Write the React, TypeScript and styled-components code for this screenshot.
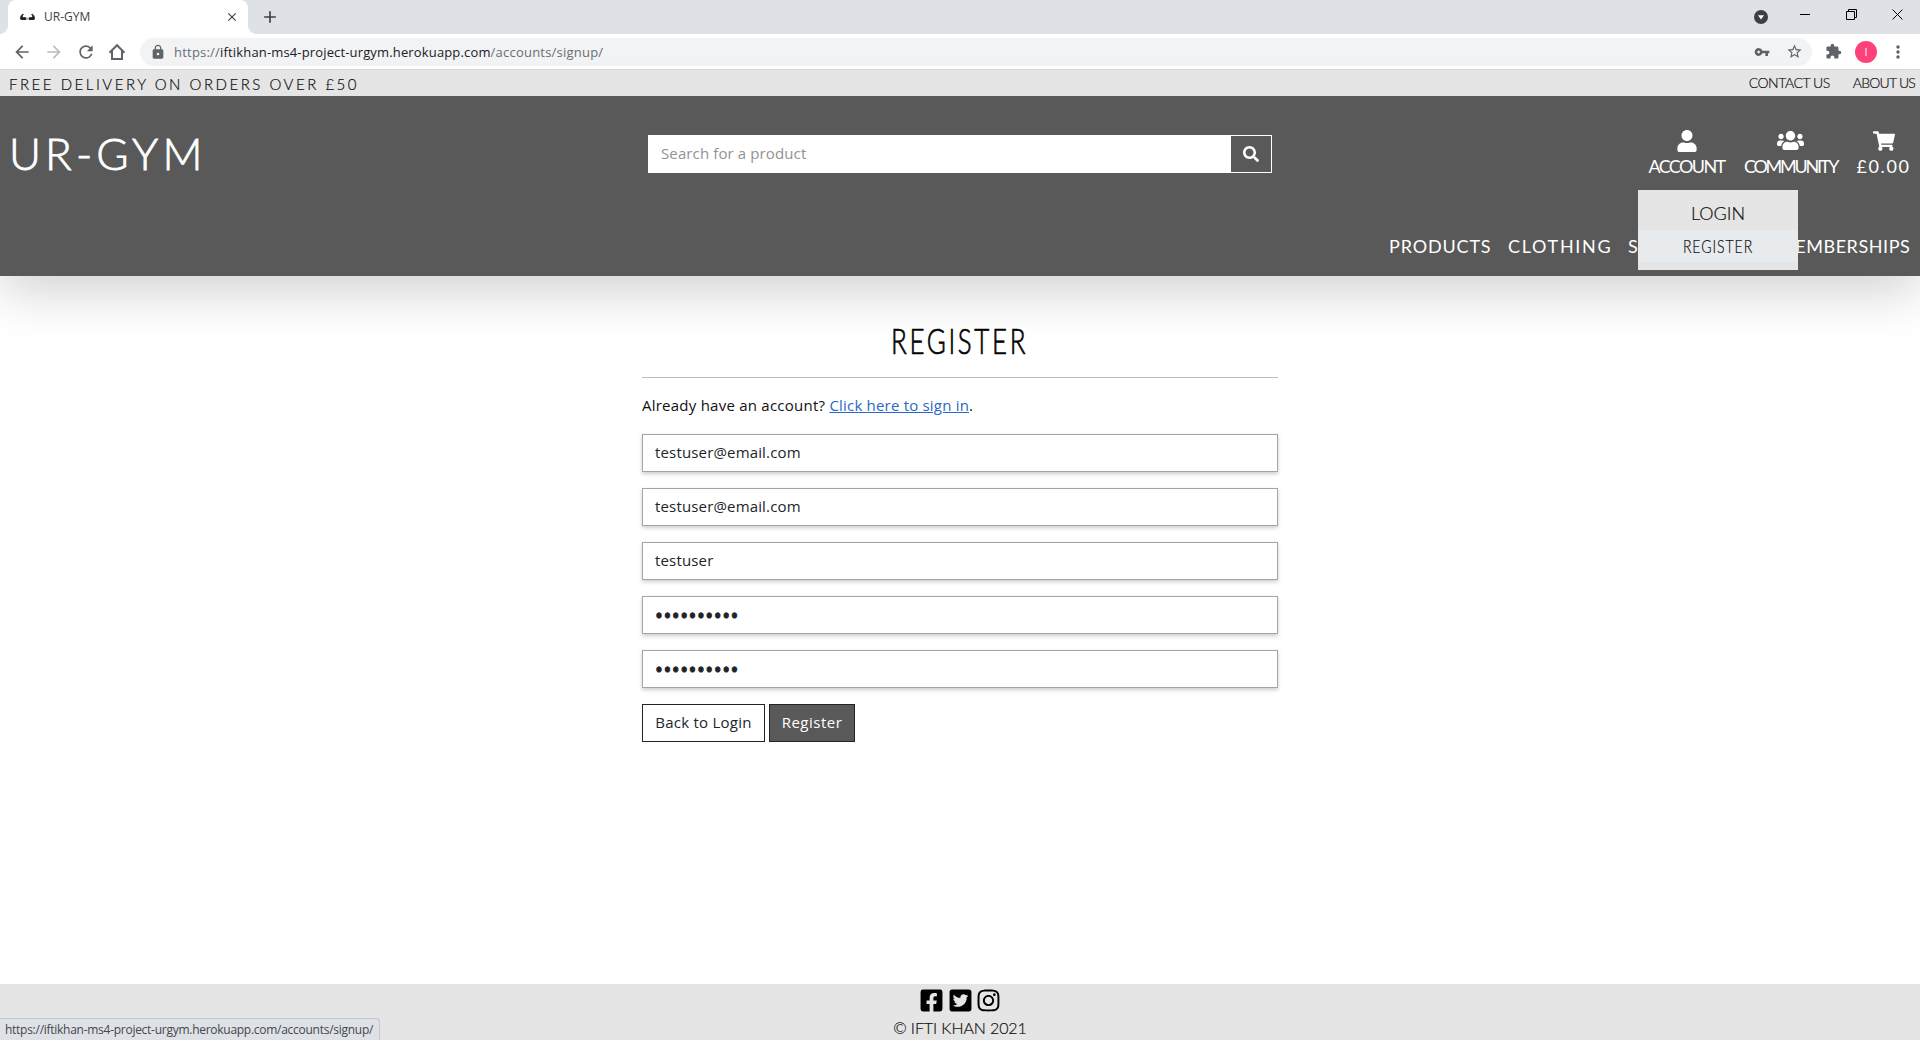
import React from "react";
import styled, { createGlobalStyle } from "styled-components";
import {
  MdArrowBack, MdArrowForward, MdRefresh, MdLock, MdVpnKey, MdStarBorder,
  MdExtension, MdMoreVert, MdClose, MdAdd,
} from "react-icons/md";
import {
  FaUser, FaUsers, FaShoppingCart, FaSearch, FaFacebookSquare, FaTwitterSquare, FaInstagram,
} from "react-icons/fa";

const GlobalStyle = createGlobalStyle`
  *, *::before, *::after { box-sizing: border-box; }
  body {
    margin: 0;
    background: #fff;
    color: #212529;
    font-family: "Open Sans", "Noto Sans", sans-serif;
    font-size: 15px;
  }
  svg { display: block; flex: none; }
  a { color: inherit; text-decoration: none; }
`;

const display = `font-family: Lato, "Open Sans", sans-serif; white-space: nowrap;`;

const Screen = styled.div`
  display: flex;
  flex-direction: column;
  height: 1040px;
  overflow: hidden;
`;

/* ---------- browser chrome ---------- */

const TabStrip = styled.div`
  display: flex;
  align-items: stretch;
  height: 34px;
  padding-left: 8px;
  background: #dee1e6;
  color: #3c4043;
`;

const Tab = styled.div`
  position: relative;
  display: flex;
  align-items: center;
  width: 240px;
  padding: 0 9px 0 11px;
  background: #fff;
  border-radius: 8px 8px 0 0;
  &::before, &::after {
    content: "";
    position: absolute;
    bottom: 0;
    width: 8px;
    height: 8px;
  }
  &::before { left: -8px; background: radial-gradient(circle at 0 0, transparent 7.5px, #fff 8px); }
  &::after { right: -8px; background: radial-gradient(circle at 100% 0, transparent 7.5px, #fff 8px); }
`;

const TabTitle = styled.span`
  flex: 1;
  padding-left: 8px;
  font-size: 12px;
  line-height: 16px;
`;

const NewTab = styled.div`
  display: flex;
  align-items: center;
  padding-left: 12px;
`;

const WindowControls = styled.div`
  display: flex;
  align-items: center;
  margin-left: auto;
  padding: 0 17px 5px 0;
  color: #000;
`;

const ControlSlot = styled.div<{ $gap: number; $drop?: number }>`
  margin-left: ${(p) => p.$gap}px;
  padding-top: ${(p) => p.$drop ?? 0}px;
`;

const Toolbar = styled.div`
  display: flex;
  align-items: center;
  height: 36px;
  padding: 0 12px;
  background: #fff;
  border-bottom: 1px solid #d6d8db;
  color: #5f6368;
`;

const NavButtons = styled.div`
  display: flex;
  align-items: center;
  gap: 12px;
  width: 128px;
`;

const Faded = styled.span`
  color: #babcbe;
`;

const Omnibox = styled.div`
  display: flex;
  align-items: center;
  width: 1672px;
  height: 28px;
  padding: 0 9px 0 10px;
  background: #f1f3f4;
  border-radius: 14px;
`;

const Url = styled.div`
  flex: 1;
  padding-left: 8px;
  font-size: 13px;
  line-height: 20px;
  letter-spacing: 0.22px;
  color: #6a6e73;
`;

const Host = styled.span`
  color: #202124;
  letter-spacing: 0.15px;
`;

const OmniIcons = styled.div`
  display: flex;
  align-items: center;
  gap: 16px;
`;

const ToolbarEnd = styled.div`
  display: flex;
  align-items: center;
  flex: 1;
  padding-left: 13px;
`;

const Avatar = styled.div`
  width: 22px;
  height: 22px;
  margin: 0 11px 0 13px;
  border-radius: 50%;
  background: #ff4079;
  color: #fff;
  font-size: 11px;
  line-height: 22px;
  text-align: center;
`;

/* ---------- site header ---------- */

const Banner = styled.div`
  position: relative;
  z-index: 1;
  display: flex;
  justify-content: space-between;
  height: 26px;
  padding: 0 5px 0 9px;
  background: #e5e5e5;
  color: #111;
  line-height: 26px;
  ${display}
  font-weight: 300;
  -webkit-text-stroke: 0.2px currentColor;
`;

const Delivery = styled.span`
  padding-top: 1px;
  font-size: 15px;
  letter-spacing: 2.52px;
`;

const BannerLinks = styled.nav`
  display: flex;
  gap: 23px;
  font-size: 14px;
`;

const BannerLink = styled.a<{ $track: number }>`
  letter-spacing: ${(p) => p.$track}px;
`;

const Header = styled.header`
  height: 180px;
  background: #595959;
  color: #fff;
  box-shadow: 0 16px 48px rgba(0, 0, 0, 0.175);
  ${display}
`;

const HeaderTop = styled.div`
  display: grid;
  grid-template-columns: 1fr 624px 1fr;
  align-items: center;
  height: 116px;
  padding: 0 10px;
`;

const Brand = styled.a`
  margin-left: -1px;
  padding-bottom: 2px;
  font-size: 44px;
  font-weight: 300;
  line-height: 50px;
  letter-spacing: 4.1px;
  -webkit-text-stroke: 0.8px currentColor;
`;

const SearchBar = styled.div`
  display: flex;
  height: 38px;
  border: 1px solid #fff;
  font-family: "Open Sans", "Noto Sans", sans-serif;
`;

const SearchInput = styled.div`
  flex: 1;
  padding-left: 12px;
  background: #fff;
  color: #929292;
  font-size: 15px;
  line-height: 34px;
  letter-spacing: 0.12px;
`;

const SearchButton = styled.div`
  display: flex;
  align-items: center;
  justify-content: center;
  width: 40px;
`;

const Actions = styled.div`
  display: flex;
  justify-content: flex-end;
  gap: 20px;
  padding-bottom: 1px;
`;

const Action = styled.div<{ $width: number; $track: number }>`
  position: relative;
  display: flex;
  flex-direction: column;
  align-items: center;
  width: ${(p) => p.$width}px;
  font-size: 18px;
  line-height: 26px;
  letter-spacing: ${(p) => p.$track}px;
`;

const ActionIcon = styled.div`
  display: flex;
  align-items: center;
  height: 24px;
`;

const Dropdown = styled.div`
  position: absolute;
  z-index: 2;
  top: 61px;
  left: -11px;
  width: 160px;
  padding: 7.5px 0;
  background: #e5e5e5;
  color: #111;
  font-weight: 300;
  text-align: center;
  -webkit-text-stroke: 0.2px currentColor;
`;

const DropdownItem = styled.a<{ $active?: boolean }>`
  display: block;
  height: 32.5px;
  line-height: 32.5px;
  letter-spacing: 0;
  background: ${(p) => (p.$active ? "#e7ebee" : "transparent")};
`;

const Condensed = styled.span<{ $scale: number; $track: number }>`
  display: inline-block;
  letter-spacing: ${(p) => p.$track}px;
  transform: scaleX(${(p) => p.$scale});
`;

const MainNav = styled.nav`
  display: flex;
  justify-content: flex-end;
  gap: 17px;
  padding: 21px 9px 0 0;
  font-size: 18px;
  line-height: 26px;
`;

const NavLink = styled.a<{ $width: number; $track: number }>`
  width: ${(p) => p.$width}px;
  letter-spacing: ${(p) => p.$track}px;
`;

/* ---------- form ---------- */

const Main = styled.main`
  flex: 1;
  width: 636px;
  margin: 0 auto;
  padding-top: 43px;
`;

const Title = styled.h1`
  height: 59px;
  margin: 0;
  border-bottom: 1px solid #bcbcbc;
  color: #000;
  font-size: 35px;
  font-weight: 300;
  line-height: 42px;
  text-align: center;
  -webkit-text-stroke: 0.7px currentColor;
  ${display}
`;

const Prompt = styled.p`
  margin: 16px 0 17px;
  color: #111;
  line-height: 23px;
  letter-spacing: 0.24px;
`;

const SignIn = styled.a`
  color: #2a68c8;
  letter-spacing: 0.2px;
  text-decoration: underline;
`;

const Field = styled.div<{ $secret?: boolean }>`
  height: 38px;
  margin-bottom: 16px;
  padding-left: 12px;
  background: #fff;
  border: 1px solid #a5a5a5;
  box-shadow: 0 2px 4px rgba(0, 0, 0, 0.2);
  font-size: ${(p) => (p.$secret ? 21 : 15)}px;
  line-height: ${(p) => (p.$secret ? 36 : 35)}px;
  letter-spacing: ${(p) => (p.$secret ? 0.5 : 0.16)}px;
  -webkit-text-stroke: ${(p) => (p.$secret ? 1 : 0)}px currentColor;
`;

const ButtonRow = styled.div`
  display: flex;
  gap: 4px;
`;

const Button = styled.button<{ $width: number; $filled?: boolean; $track: number }>`
  width: ${(p) => p.$width}px;
  height: 38px;
  padding: 0 0 2px;
  border: 1px solid #212529;
  background: ${(p) => (p.$filled ? "#595959" : "#fff")};
  color: ${(p) => (p.$filled ? "#fff" : "#212529")};
  font: 15px/34px "Open Sans", "Noto Sans", sans-serif;
  letter-spacing: ${(p) => p.$track}px;
`;

/* ---------- footer ---------- */

const Footer = styled.footer`
  display: flex;
  flex-direction: column;
  align-items: center;
  height: 56px;
  padding-top: 4px;
  background: #e5e5e5;
  color: #111;
  font-size: 16px;
  font-weight: 300;
  line-height: 24px;
  letter-spacing: -0.1px;
  -webkit-text-stroke: 0.2px currentColor;
  ${display}
`;

const Socials = styled.div`
  display: flex;
  gap: 3.6px;
  height: 28px;
  color: #000;
`;

const StatusBubble = styled.div`
  position: absolute;
  left: 0;
  top: 1018px;
  width: 380px;
  height: 22px;
  padding-left: 5px;
  background: #dee1e6;
  border: solid #c3c6ca;
  border-width: 1px 1px 0 0;
  border-top-right-radius: 4px;
  color: #44474b;
  font-size: 12px;
  line-height: 21px;
  letter-spacing: -0.27px;
  white-space: nowrap;
`;

const Favicon = () => (
  <svg width="17" height="8" viewBox="0 0 17 8" fill="#222">
    <path d="M1 5.6 Q1.2 2.4 3.6 .8 L5 1.6 L3.6 2.8 L4 4.2 Q5.6 3.4 7 4.6 V7 H2.6 Q1 7 1 5.6Z" />
    <path d="M16 5.6 Q15.8 2.4 13.4 .8 L12 1.6 L13.4 2.8 L13 4.2 Q11.4 3.4 10 4.6 V7 H14.4 Q16 7 16 5.6Z" />
    <path d="M7 4.6 H10 V6.6 H7Z" fill="#aaa" />
  </svg>
);

const HomeIcon = () => (
  <svg width="18" height="18" viewBox="0 0 18 18" fill="none" stroke="currentColor" strokeWidth="2">
    <path d="M1.5 9.8 L9 2.2 L16.5 9.8 M4 8 V16 H14 V8" />
  </svg>
);

const CaretBadge = () => (
  <svg width="14" height="14" viewBox="0 0 14 14">
    <circle cx="7" cy="7" r="7" fill="#3c4043" />
    <path d="M4 5.2 H10 L7 9.6Z" fill="#fff" />
  </svg>
);

const Glyph = ({ d }: { d: string }) => (
  <svg width="11" height="11" viewBox="0 0 11 11" fill="none" stroke="currentColor">
    <path d={d} />
  </svg>
);

const fields = ["testuser@email.com", "testuser@email.com", "testuser"];
const passwords = ["••••••••••", "••••••••••"];

export default function App() {
  return (
    <Screen>
      <GlobalStyle />
      <TabStrip>
        <Tab>
          <Favicon />
          <TabTitle>UR-GYM</TabTitle>
          <MdClose size={14} />
        </Tab>
        <NewTab><MdAdd size={20} /></NewTab>
        <WindowControls>
          <ControlSlot $gap={0} $drop={5}><CaretBadge /></ControlSlot>
          <ControlSlot $gap={32}><Glyph d="M0 5.5 H10" /></ControlSlot>
          <ControlSlot $gap={35}><Glyph d="M.5 2.5 H8.5 V10.5 H.5Z M2.5 2.5 V.5 H10.5 V8.5 H8.5" /></ControlSlot>
          <ControlSlot $gap={35}><Glyph d="M.5 .5 L10.5 10.5 M10.5 .5 L.5 10.5" /></ControlSlot>
        </WindowControls>
      </TabStrip>
      <Toolbar>
        <NavButtons>
          <MdArrowBack size={20} />
          <Faded><MdArrowForward size={20} /></Faded>
          <MdRefresh size={20} />
          <HomeIcon />
        </NavButtons>
        <Omnibox>
          <MdLock size={16} />
          <Url>https://<Host>iftikhan-ms4-project-urgym.herokuapp.com</Host>/accounts/signup/</Url>
          <OmniIcons>
            <MdVpnKey size={16} />
            <MdStarBorder size={17} />
          </OmniIcons>
        </Omnibox>
        <ToolbarEnd>
          <MdExtension size={17} />
          <Avatar>I</Avatar>
          <MdMoreVert size={20} />
        </ToolbarEnd>
      </Toolbar>

      <Banner>
        <Delivery>FREE DELIVERY ON ORDERS OVER £50</Delivery>
        <BannerLinks>
          <BannerLink $track={-0.45}>CONTACT US</BannerLink>
          <BannerLink $track={-0.78}>ABOUT US</BannerLink>
        </BannerLinks>
      </Banner>

      <Header>
        <HeaderTop>
          <Brand>UR-GYM</Brand>
          <SearchBar>
            <SearchInput>Search for a product</SearchInput>
            <SearchButton><FaSearch size={16} /></SearchButton>
          </SearchBar>
          <Actions>
            <Action $width={75} $track={-1.62}>
              <ActionIcon><FaUser size={22} /></ActionIcon>
              ACCOUNT
              <Dropdown>
                <DropdownItem>LOGIN</DropdownItem>
                <DropdownItem $active>
                  <Condensed $scale={0.78} $track={1.2}>REGISTER</Condensed>
                </DropdownItem>
              </Dropdown>
            </Action>
            <Action $width={93} $track={-2.25}>
              <ActionIcon><FaUsers size={27} /></ActionIcon>
              COMMUNITY
            </Action>
            <Action $width={53} $track={1.6}>
              <ActionIcon><FaShoppingCart size={22} /></ActionIcon>
              £0.00
            </Action>
          </Actions>
        </HeaderTop>
        <MainNav>
          <NavLink $width={102} $track={0.85}>PRODUCTS</NavLink>
          <NavLink $width={103} $track={1.7}>CLOTHING</NavLink>
          <NavLink $width={133} $track={0.9}>S</NavLink>
          <NavLink $width={133} $track={0.55}>MEMBERSHIPS</NavLink>
        </MainNav>
      </Header>

      <Main>
        <Title><Condensed $scale={0.74} $track={3.6}>REGISTER</Condensed></Title>
        <Prompt>Already have an account? <SignIn>Click here to sign in</SignIn>.</Prompt>
        {fields.map((value, i) => <Field key={i}>{value}</Field>)}
        {passwords.map((value, i) => <Field key={i} $secret>{value}</Field>)}
        <ButtonRow>
          <Button $width={123} $track={0.25}>Back to Login</Button>
          <Button $width={86} $filled $track={0.5}>Register</Button>
        </ButtonRow>
      </Main>

      <Footer>
        <Socials>
          <FaFacebookSquare size={25} />
          <FaTwitterSquare size={25} />
          <FaInstagram size={25} />
        </Socials>
        © IFTI KHAN 2021
      </Footer>
      <StatusBubble>https://iftikhan-ms4-project-urgym.herokuapp.com/accounts/signup/</StatusBubble>
    </Screen>
  );
}
